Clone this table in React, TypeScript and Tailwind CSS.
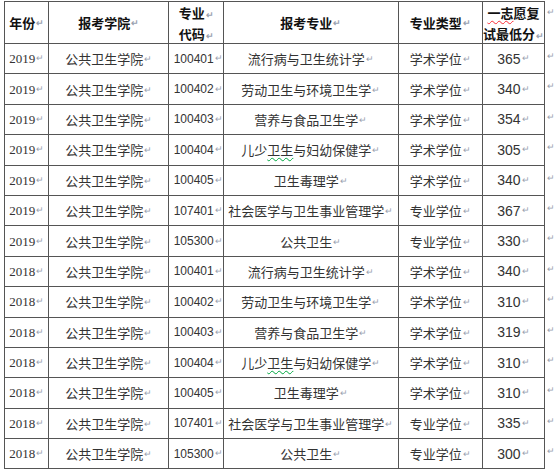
const rows: [string, string, string, string, string, string][] = [
  ['2019', '公共卫生学院', '100401', '流行病与卫生统计学', '学术学位', '365'],
  ['2019', '公共卫生学院', '100402', '劳动卫生与环境卫生学', '学术学位', '340'],
  ['2019', '公共卫生学院', '100403', '营养与食品卫生学', '学术学位', '354'],
  ['2019', '公共卫生学院', '100404', '儿少卫生与妇幼保健学', '学术学位', '305'],
  ['2019', '公共卫生学院', '100405', '卫生毒理学', '学术学位', '340'],
  ['2019', '公共卫生学院', '107401', '社会医学与卫生事业管理学', '专业学位', '367'],
  ['2019', '公共卫生学院', '105300', '公共卫生', '专业学位', '330'],
  ['2018', '公共卫生学院', '100401', '流行病与卫生统计学', '学术学位', '340'],
  ['2018', '公共卫生学院', '100402', '劳动卫生与环境卫生学', '学术学位', '310'],
  ['2018', '公共卫生学院', '100403', '营养与食品卫生学', '学术学位', '319'],
  ['2018', '公共卫生学院', '100404', '儿少卫生与妇幼保健学', '学术学位', '310'],
  ['2018', '公共卫生学院', '100405', '卫生毒理学', '学术学位', '310'],
  ['2018', '公共卫生学院', '107401', '社会医学与卫生事业管理学', '专业学位', '335'],
  ['2018', '公共卫生学院', '105300', '公共卫生', '专业学位', '300'],
]

const cjk = "font-['SimSun','Noto_Sans_CJK_SC',sans-serif]"

function Mark() {
  return <span className="text-[9px] leading-none text-gray-400 ml-[1px]">↵</span>
}

function Major({ name }: { name: string }) {
  if (name === '儿少卫生与妇幼保健学') {
    return (
      <span>
        儿少
        <span className="underline decoration-wavy decoration-green-600 decoration-1 underline-offset-2">卫生</span>
        与妇幼保健学
      </span>
    )
  }
  return <span>{name}</span>
}

function Cell({ children, className = '', h }: { children: React.ReactNode; className?: string; h: string }) {
  return (
    <td className="border border-[#555] p-0">
      <div className={`${h} flex items-center justify-center whitespace-nowrap leading-none overflow-hidden ${className}`}>
        {children}
      </div>
    </td>
  )
}

export default function App() {
  const rowH = 'h-[29.4px]'
  return (
    <div className="w-[555px] h-[471px] bg-white overflow-hidden pl-[4px] pt-[1px]">
      <div className="flex">
        <table className={`border-collapse table-fixed text-[13px] text-[#333] ${cjk}`}>
          <colgroup>
            <col className="w-[45px]" />
            <col className="w-[122px]" />
            <col className="w-[55px]" />
            <col className="w-[175px]" />
            <col className="w-[86px]" />
            <col className="w-[60px]" />
          </colgroup>
          <thead>
            <tr className="font-bold text-[#111]">
              <Cell h="h-[41px]">年份<Mark /></Cell>
              <Cell h="h-[41px]">报考学院<Mark /></Cell>
              <Cell h="h-[41px]" className="flex-col gap-[8px]">
                <span>专业<Mark /></span>
                <span>代码<Mark /></span>
              </Cell>
              <Cell h="h-[41px]">报考专业<Mark /></Cell>
              <Cell h="h-[41px]">专业类型<Mark /></Cell>
              <Cell h="h-[41px]" className="flex-col gap-[8px]">
                <span>
                  <span className="underline decoration-wavy decoration-red-500 decoration-1 underline-offset-2">一志</span>
                  愿复
                </span>
                <span>试最低分<Mark /></span>
              </Cell>
            </tr>
          </thead>
          <tbody>
            {rows.map((r, i) => (
              <tr key={i}>
                <Cell h={rowH} className="font-['Liberation_Serif',serif]">{r[0]}<Mark /></Cell>
                <Cell h={rowH}>{r[1]}<Mark /></Cell>
                <Cell h={rowH} className="font-['Liberation_Sans',sans-serif] text-[12px] pl-[4px]">{r[2]}<Mark /></Cell>
                <Cell h={rowH}><Major name={r[3]} /><Mark /></Cell>
                <Cell h={rowH}>{r[4]}<Mark /></Cell>
                <Cell h={rowH} className="font-['Liberation_Sans',Arial,sans-serif] text-[14px]">{r[5]}<Mark /></Cell>
              </tr>
            ))}
          </tbody>
        </table>
        <div className="flex flex-col pl-[2px] text-[9px] text-gray-400 leading-none">
          <div className="h-[42px] pt-[6px]">↵</div>
          {rows.map((_, i) => (
            <div key={i} className="h-[30.4px] pt-[8px]">↵</div>
          ))}
        </div>
      </div>
    </div>
  )
}
